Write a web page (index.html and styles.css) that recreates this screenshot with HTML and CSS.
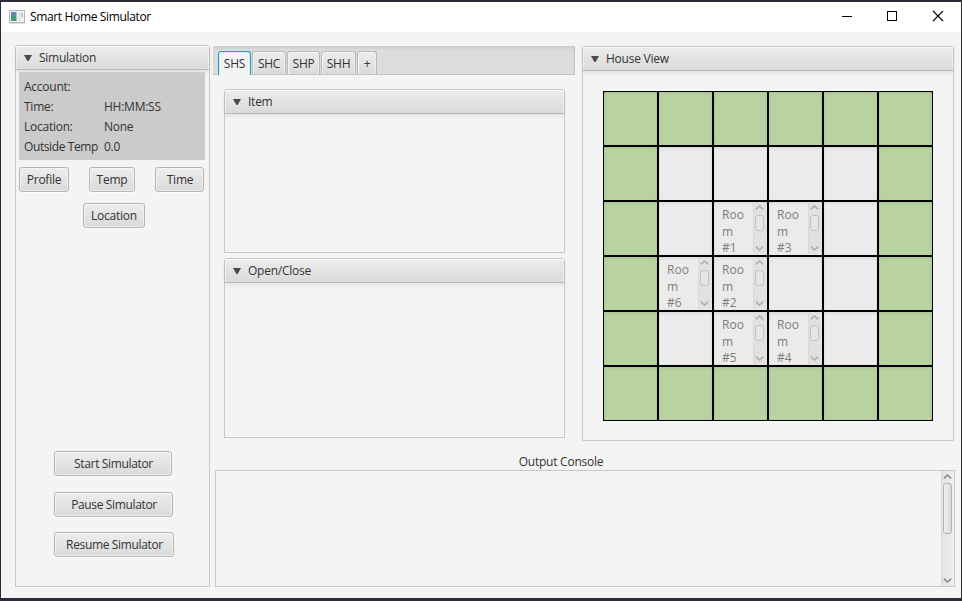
FILE: index.html
```
<!DOCTYPE html>
<html lang="en">
<head>
<meta charset="utf-8">
<title>Smart Home Simulator</title>
<link rel="stylesheet" href="styles.css">
</head>
<body>
<svg width="0" height="0" class="defs">
  <symbol id="up" viewBox="0 0 9 5"><path d="M.8 4.300 4.500 1 8.200 4.300" fill="none" stroke="currentColor" stroke-width="1.600"/></symbol>
  <symbol id="down" viewBox="0 0 9 5"><path d="M.8 .7 4.500 4 8.200 .7" fill="none" stroke="currentColor" stroke-width="1.600"/></symbol>
  <symbol id="tri" viewBox="0 0 8 6"><path d="M0 0h8L4.600 6H3.400z" fill="#4a4a4a"/></symbol>
</svg>
<div class="window">
  <header class="titlebar">
    <svg class="app-icon" width="16" height="14" viewBox="0 0 16 14">
      <rect x=".5" y=".5" width="15" height="12" fill="#f3f3f5" stroke="#b4b4ba"/>
      <path d="M2 2h5v4H2z" fill="#6585a8"/><path d="M2 6h5v5H2z" fill="#4b9478"/>
      <rect x="7" y="2" width="1" height="9" fill="#a9c4bd"/>
      <rect x="9" y="2" width="3" height="9" fill="#e4e7ea"/><rect x="12" y="3" width="2" height="4" fill="#b5cdd5"/>
      <path d="M0 13h16" stroke="#b9b9bd"/>
    </svg>
    <h1>Smart Home Simulator</h1>
    <svg class="controls" width="102" height="12" viewBox="0 0 102 12" fill="none" stroke="#000">
      <path d="M0 6.500h10"/><rect x="45.500" y="1.500" width="9" height="9"/><path d="M91 1l10 10M101 1 91 11" stroke-width="1.100"/>
    </svg>
  </header>
  <main>
    <section class="pane simulation">
      <h2><svg width="8" height="6"><use href="#tri"/></svg>Simulation</h2>
      <dl>
        <dt>Account:</dt><dd></dd>
        <dt>Time:</dt><dd>HH:MM:SS</dd>
        <dt>Location:</dt><dd>None</dd>
        <dt class="outside">Outside Temp</dt><dd>0.0</dd>
      </dl>
      <div class="row">
        <button class="profile">Profile</button><button class="temp">Temp</button><button class="time">Time</button>
      </div>
      <button class="location">Location</button>
      <div class="run">
        <button class="start">Start Simulator</button>
        <button class="pause">Pause Simulator</button>
        <button class="resume">Resume Simulator</button>
      </div>
    </section>
    <div class="right">
      <div class="top">
        <div class="tabpane">
          <nav><span class="tab active">SHS</span><span class="tab t2">SHC</span><span class="tab t3">SHP</span><span class="tab t4">SHH</span><span class="tab add">+</span></nav>
          <section class="pane item"><h2><svg width="8" height="6"><use href="#tri"/></svg>Item</h2></section>
          <section class="pane openclose"><h2><svg width="8" height="6"><use href="#tri"/></svg>Open/Close</h2></section>
        </div>
        <section class="pane house">
          <h2><svg width="8" height="6"><use href="#tri"/></svg>House View</h2>
          <div class="grid" id="grid"></div>
        </section>
      </div>
      <div class="label">Output Console</div>
      <div class="console">
        <div class="track"><svg width="9" height="5"><use href="#up"/></svg><i></i><svg width="9" height="5"><use href="#down"/></svg></div>
      </div>
    </div>
  </main>
</div>
<script src="app.js"></script>
</body>
</html>
```
FILE: styles.css
```
* { box-sizing: border-box; }
body { margin: 0; background: #2b2c36; font-family: "Open Sans", "Noto Sans", sans-serif; font-size: 12px; letter-spacing: -0.25px; color: #333; overflow: hidden; }
svg { display: block; flex: none; }
.defs { position: absolute; }
.window { height: 601px; border: solid #2b2c36; border-width: 2px 1px 3px; background: #f4f4f4; }
.titlebar { height: 30px; background: #fff; display: flex; align-items: center; padding: 0 17px 0 8px; }
h1 { margin: 0 auto 0 5px; font-size: 12px; font-weight: 400; color: #000; line-height: 16px; letter-spacing: -0.35px; }
.controls { margin-top: -2px; }
main { display: flex; gap: 3px; padding: 13px 6px 11px 14px; height: 566px; }
.pane { border: 1px solid #c8c8c8; border-radius: 3px 3px 0 0; background: #f4f4f4; }
.pane h2 { margin: 0; height: 24px; padding-left: 8px; display: flex; align-items: center; gap: 7px; font-size: 12px; font-weight: 400; line-height: 16px; border-bottom: 1px solid #b8b8b8; border-radius: 2px 2px 0 0; background: linear-gradient(#ededed, #dadada); box-shadow: inset 0 1px #fbfbfb, inset 1px 0 #efefef, inset -1px 0 #efefef, 0 2px 4px rgba(0,0,0,.09); }
.simulation { width: 195px; height: 542px; display: flex; flex-direction: column; padding-bottom: 29px; }
dl { margin: 2px 4px 0 3px; height: 88px; padding: 5px; background: #cbcbcb; display: grid; grid-template-columns: 80px 1fr; grid-auto-rows: 20px; line-height: 20px; white-space: nowrap; position: relative; }
dt, dd { margin: 0; }
.outside { letter-spacing: -0.4px; }
button { font: inherit; letter-spacing: inherit; color: inherit; height: 25px; padding: 0; border: 1px solid #b5b5b5; border-radius: 3px; background: linear-gradient(#ededed, #dadada); box-shadow: inset 0 0 0 1px rgba(255,255,255,.5), 0 1px #fcfcfc; white-space: nowrap; }
.row { display: flex; justify-content: space-between; margin: 7px 5px 11px 3px; }
.profile { width: 50px; }
.temp { width: 46px; }
.time { width: 49px; padding-left: 1px; }
.location { width: 62px; margin-left: 67px; }
.run { margin-top: auto; margin-left: 38px; display: flex; flex-direction: column; align-items: flex-start; gap: 15px; }
.run button { letter-spacing: -0.35px; padding-left: 1px; }
.start { width: 118px; margin-bottom: 1px; }
.pause { width: 119px; }
.resume { width: 120px; }
.right { flex: 1; padding-top: 1px; }
.top { display: flex; gap: 7px; }
.tabpane { width: 362px; }
nav { height: 29px; display: flex; gap: 1px; align-items: flex-end; padding-left: 5px; border: 1px solid #c4c4c4; border-width: 0 1px 1px 0; background: #dcdcdc; box-shadow: inset 0 3px 3px -1px #cdcdcd; }
.tab { height: 23px; border: 1px solid #b9b9b9; border-bottom: 0; border-radius: 3px 3px 0 0; background: linear-gradient(#ededed, #dadada); box-shadow: inset 1px 1px #f5f5f5, inset -1px 0 #eee; text-align: center; line-height: 24px; }
.active { width: 33px; height: 24px; margin-bottom: -1px; background: #f4f4f4; border-color: #1e9fcd; box-shadow: inset 1px 1px #d6edf6, inset -1px 0 #d6edf6; line-height: 23px; }
.t2 { width: 34px; }
.t3 { width: 33px; }
.t4 { width: 35px; }
.add { width: 20px; }
.item { margin: 14px 10px 5px 11px; height: 164px; }
.openclose { margin: 0 10px 0 11px; height: 180px; }
.house { width: 372px; height: 395px; }
.grid { display: grid; grid-template-columns: repeat(6, 55px); grid-auto-rows: 55px; width: 330px; margin: 20px 0 0 20px; }
.cell { border: 1px solid #000; background: #ebebeb; box-shadow: inset 0 2px 3px rgba(0,0,0,.06), inset 0 0 2px rgba(0,0,0,.06); overflow: hidden; }
.lawn { background: #b9d3a0; }
.room { display: flex; justify-content: space-between; padding: 1px 1px 1px 8px; color: #7e7e7e; }
.room p { margin: 4px 0 0; width: 26px; line-height: 16.500px; overflow-wrap: anywhere; letter-spacing: 0; }
.track { display: flex; flex-direction: column; align-items: center; justify-content: space-between; color: #8d8d8d; border-left: 1px solid #dadada; background: linear-gradient(90deg, #e4e4e4, #ececec); }
.room .track { width: 13px; height: 51px; padding: 2px 1px 3px 0; color: #aeaeae; background: #e1e1e1; }
.track i { border: 1px solid #b4b4b4; border-radius: 3px; background: linear-gradient(90deg, #f0f0f0, #dadada); }
.room .track i { width: 9px; height: 16px; margin-bottom: 10px; border-color: #c1c1c1; background: #e6e6e6; }
.label { margin-top: 13px; height: 16px; line-height: 16px; text-align: center; padding-right: 46px; }
.console { height: 117px; margin-left: 2px; border: 1px solid #c8c8c8; padding-right: 1px; display: flex; justify-content: flex-end; }
.console .track { width: 12px; padding: 3px 0; }
.console .track i { width: 9px; height: 51px; margin-bottom: 41px; }
```
FILE: app.js
```
const rooms = { "2,2": 1, "2,3": 3, "3,1": 6, "3,2": 2, "4,2": 5, "4,3": 4 };
const grid = document.getElementById("grid");
for (let r = 0; r < 6; r++) {
  for (let c = 0; c < 6; c++) {
    const cell = document.createElement("div");
    const n = rooms[r + "," + c];
    const edge = r === 0 || c === 0 || r === 5 || c === 5;
    cell.className = "cell" + (edge ? " lawn" : "") + (n ? " room" : "");
    if (n) {
      cell.innerHTML = `<p>Roo<br>m<br>#${n}</p><div class="track"><svg width="9" height="5"><use href="#up"/></svg><i></i><svg width="9" height="5"><use href="#down"/></svg></div>`;
    }
    grid.append(cell);
  }
}
```
